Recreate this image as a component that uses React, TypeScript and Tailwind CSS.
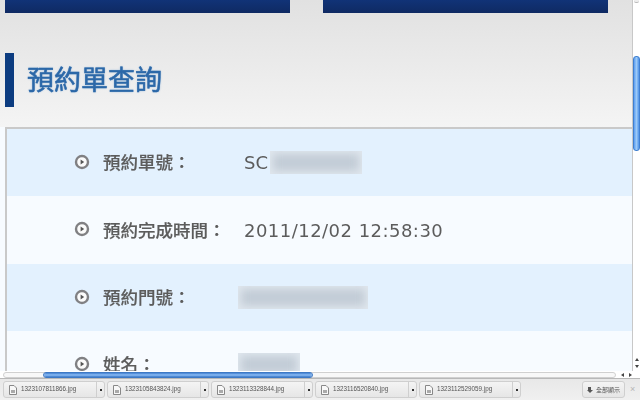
const cjk = "font-['Liberation_Sans','Noto_Sans_CJK_TC',sans-serif]";

const files = [
  "1323107811866.jpg",
  "1323105843824.jpg",
  "1323113328844.jpg",
  "1323116520840.jpg",
  "1323112529059.jpg",
];

const Bullet = () => (
  <svg width="16" height="16" viewBox="0 0 16 16" className="mt-[-1px] shrink-0 blur-[0.5px]">
    <circle cx="8" cy="8" r="6" fill="#fbfbfb" stroke="#808083" strokeWidth="2.4" />
    <path d="M6.6 5.4 L10.2 8 L6.6 10.6 Z" fill="#555" />
  </svg>
);

const Smudge = ({ width, className = "" }: { width: number; className?: string }) => (
  <div className={`h-[23px] overflow-hidden bg-[#e0e7ee] ${className}`} style={{ width }}>
    <div className="m-[3px] h-[17px] bg-[#c2ccd6] blur-[4px]" />
  </div>
);

const Row = ({ label, tint, children }: { label: string; tint: string; children: React.ReactNode }) => (
  <div className={`flex h-[67.3px] shrink-0 items-center pl-[67px] ${tint}`}>
    <Bullet />
    <span className="ml-[13px] w-[144px] shrink-0 pt-[3px] text-[17.5px] leading-none font-medium text-[#5c5c5c] blur-[0.4px] [-webkit-text-stroke:0.2px_#5c5c5c]">{label}</span>
    {children}
  </div>
);

const FileChip = ({ name }: { name: string }) => (
  <div className="flex h-[17px] w-[102px] shrink-0 items-center rounded-[3px] border border-[#cfcfcf] bg-gradient-to-b from-[#f4f4f4] to-[#e6e6e6]">
    <svg width="8" height="10" viewBox="0 0 8 10" className="ml-[5px] shrink-0 blur-[0.3px]">
      <path d="M0.5 0.5 H5 L7.5 3 V9.5 H0.5 Z" fill="#f8f8f8" stroke="#888" />
      <path d="M2 5 H6 V8 H2 Z" fill="#aaa" />
    </svg>
    <span className="ml-[4px] flex-1 text-[6.3px] leading-none text-[#555] blur-[0.35px]">{name}</span>
    <div className="flex h-full w-[8px] items-center justify-center border-l border-[#cfcfcf]">
      <div className="h-[2px] w-[2px] bg-[#333]" />
    </div>
  </div>
);

export default function App() {
  return (
    <div className={`flex h-[400px] w-[640px] flex-col overflow-hidden bg-white ${cjk}`}>
      <div className="flex h-[371px] shrink-0">
        <div className="h-full w-[632px] shrink-0 overflow-hidden bg-[#f7fbff]">
          <div className="h-[127px] bg-gradient-to-b from-[#e1e1e1] to-[#f4f4f4] pl-[5px]">
            <div className="flex h-[13px]">
              <div className="w-[285px] bg-gradient-to-b from-[#113377] to-[#0f2a63]" />
              <div className="ml-[33px] w-[285px] bg-gradient-to-b from-[#113377] to-[#0f2a63]" />
            </div>
            <div className="mt-[40px] flex h-[54px] items-center border-l-[9px] border-[#0c3c80] pl-[13px]">
              <h1 className="pt-[3px] text-[27px] leading-none font-normal text-[#2c68a8] blur-[0.3px] [-webkit-text-stroke:0.5px_#2c68a8] [text-shadow:0_0_2px_#8db2d8]">預約單查詢</h1>
            </div>
          </div>
          <div className="ml-[5px] flex h-[244px] flex-col overflow-hidden border-t-2 border-l-2 border-[#c9c9c9]">
            <Row label="預約單號：" tint="bg-[#e3f1fe]">
              <span className="ml-[-3px] w-[26px] pt-[1px] font-['DejaVu_Sans'] text-[18px] leading-none text-[#5c5c5c] blur-[0.4px]">SC</span>
              <Smudge width={92} />
            </Row>
            <Row label="預約完成時間：" tint="bg-[#f7fbff]">
              <span className="ml-[-3px] pt-[3px] font-['DejaVu_Sans'] text-[18px] leading-none tracking-[0.47px] text-[#5c5c5c] blur-[0.4px]">2011/12/02 12:58:30</span>
            </Row>
            <Row label="預約門號：" tint="bg-[#e3f1fe]">
              <Smudge width={130} className="ml-[-9px]" />
            </Row>
            <Row label="姓名：" tint="bg-[#f7fbff]">
              <Smudge width={62} className="ml-[-9px]" />
            </Row>
          </div>
        </div>

        <div className="flex w-[8px] flex-col border-l border-[#c8c8c8] bg-white">
          <div className="mx-[1px] h-[3px] rounded-b-[2px] border-b border-[#bbbbbb] bg-[#eeeeee]" />
          <div className="mt-[53px] h-[95px] rounded-[3px] border border-[#3f7fd0] bg-gradient-to-r from-[#5b9df0] via-[#9ccaf8] to-[#4f92e8]" />
          <div className="mt-auto mb-[3px] flex flex-col items-center gap-[4px]">
            <div className="h-0 w-0 border-x-[2px] border-b-[3px] border-x-transparent border-b-[#444]" />
            <div className="h-0 w-0 border-x-[2px] border-t-[3px] border-x-transparent border-t-[#444]" />
          </div>
        </div>
      </div>

      <div className="flex h-[7px] shrink-0 items-center">
        <div className="ml-[3px] h-[6px] w-[613px] rounded-[3px] border border-[#d0d0d0] bg-[#f8f8f8]">
          <div className="ml-[40px] h-full w-[268px] rounded-[3px] bg-gradient-to-b from-[#3f7fd0] via-[#8dbdf5] to-[#3a78c8] outline outline-[#3d78c4]" />
        </div>
        <div className="ml-[5px] flex items-center gap-[5px]">
          <div className="h-0 w-0 border-y-[2px] border-r-[3px] border-y-transparent border-r-[#444]" />
          <div className="h-0 w-0 border-y-[2px] border-l-[3px] border-y-transparent border-l-[#444]" />
        </div>
      </div>

      <div className="flex flex-1 items-center gap-[2px] border-t border-[#b8b8b8] bg-gradient-to-b from-[#e8e8e8] to-[#f0f0f0] pl-[3px]">
        {files.map((name) => (
          <FileChip key={name} name={name} />
        ))}
        <div className="ml-auto flex h-[17px] w-[43px] items-center justify-center gap-[3px] rounded-[3px] border border-[#cfcfcf] bg-gradient-to-b from-[#f4f4f4] to-[#e6e6e6]">
          <div className="flex flex-col items-center">
            <div className="h-[3px] w-[3px] bg-[#555]" />
            <div className="h-0 w-0 border-x-[3px] border-t-[3px] border-x-transparent border-t-[#555]" />
          </div>
          <span className="text-[6px] leading-none text-[#555] blur-[0.35px]">全部顯示</span>
        </div>
        <span className="mr-[5px] ml-[3px] w-[5px] text-center text-[9px] leading-none text-[#b5b5b5]">×</span>
      </div>
    </div>
  );
}
